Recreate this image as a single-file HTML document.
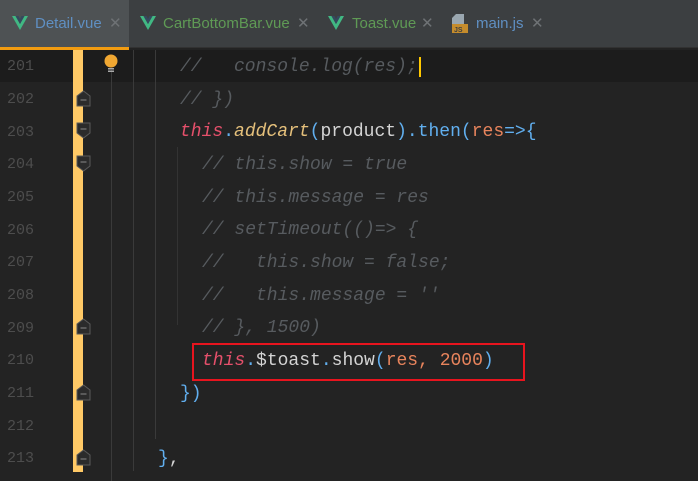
<!DOCTYPE html>
<html><head><meta charset="utf-8"><style>
*{margin:0;padding:0;box-sizing:border-box}
body{width:698px;height:481px;overflow:hidden;background:#232323;position:relative;font-family:"Liberation Sans",sans-serif}
.tabs{position:absolute;left:0;top:0;width:698px;height:48px;background:#3c3f41;border-bottom:1px solid #323232}
.tab{position:absolute;top:0;height:47px;font-size:15px;line-height:47px}
.act{left:0;width:129px;background:#4e5254}
.ul{position:absolute;left:0;top:47px;width:129px;height:3px;background:#f29c11}
.x{color:#6e7275;font-size:15px;position:absolute}
.v{position:absolute;top:16px}
.cur{position:absolute;left:0;top:50px;width:698px;height:32px;background:#1c1c1c}
.ln{position:absolute;left:7px;font-family:"Liberation Mono",monospace;font-size:15px;color:#4d4d4d}
.stripe{position:absolute;left:73px;top:50px;width:10px;height:422px;background:#ffc966}
.vl{position:absolute;width:1px;background:#3a3a3a}
.code{position:absolute;font-family:"Liberation Mono",monospace;font-size:18px;white-space:pre;color:#d4d4d4;line-height:20px}
.c{color:#575b5f;font-style:italic}
.t{color:#e5506b;font-style:italic}
.y{color:#e5c07b;font-style:italic}
.b{color:#61afef}
.o{color:#e8845c}
.fold{position:absolute;left:76px;width:15px;height:17px}
</style></head><body>
<div class="tabs">
 <div class="tab act"></div>
 <svg class="v" style="left:12px" width="16" height="14" viewBox="0 0 16 14"><path d="M0 0h3.5L8 8 12.5 0H16L8 14z" fill="#41b883"/><path d="M3.5 0h3L8 3 9.5 0h3L8 8z" fill="#35495e"/></svg>
 <div class="tab" style="left:35px;color:#5f8fc2">Detail.vue</div>
 <div class="x" style="left:109px;top:14px">✕</div>
 <svg class="v" style="left:140px" width="16" height="14" viewBox="0 0 16 14"><path d="M0 0h3.5L8 8 12.5 0H16L8 14z" fill="#41b883"/><path d="M3.5 0h3L8 3 9.5 0h3L8 8z" fill="#35495e"/></svg>
 <div class="tab" style="left:163px;color:#5f9a55">CartBottomBar.vue</div>
 <div class="x" style="left:297px;top:14px">✕</div>
 <svg class="v" style="left:328px" width="16" height="14" viewBox="0 0 16 14"><path d="M0 0h3.5L8 8 12.5 0H16L8 14z" fill="#41b883"/><path d="M3.5 0h3L8 3 9.5 0h3L8 8z" fill="#35495e"/></svg>
 <div class="tab" style="left:352px;color:#5f9a55">Toast.vue</div>
 <div class="x" style="left:421px;top:14px">✕</div>
 <svg style="position:absolute;left:452px;top:14px" width="16" height="20" viewBox="0 0 16 20"><path d="M4 0h8v10H0V4z" fill="#9aa7b0"/><rect x="0" y="10" width="18" height="9" fill="#c58c2c"/><text x="2" y="18" font-size="7" font-family="Liberation Sans" fill="#3c3f41" font-weight="bold">JS</text></svg>
 <div class="tab" style="left:476px;color:#5f8fc2">main.js</div>
 <div class="x" style="left:531px;top:14px">✕</div>
</div>
<div class="ul"></div>
<div class="cur"></div>
<div class="stripe"></div>
<div class="vl" style="left:111px;top:70px;height:411px"></div>
<div class="vl" style="left:133px;top:50px;height:421px"></div>
<div class="vl" style="left:155px;top:50px;height:389px"></div>
<div class="vl" style="left:177px;top:147px;height:178px;background:#333"></div>
<svg style="position:absolute;left:103px;top:54px" width="16" height="20" viewBox="0 0 16 20"><circle cx="8" cy="7" r="6.5" fill="#f0a732"/><rect x="5" y="14" width="6" height="1.5" fill="#aaa"/><rect x="5" y="16.5" width="6" height="1.5" fill="#aaa"/></svg>
<div class="ln" style="top:58px">201</div>
<div class="ln" style="top:91px">202</div>
<div class="ln" style="top:124px">203</div>
<div class="ln" style="top:156px">204</div>
<div class="ln" style="top:189px">205</div>
<div class="ln" style="top:222px">206</div>
<div class="ln" style="top:254px">207</div>
<div class="ln" style="top:287px">208</div>
<div class="ln" style="top:320px">209</div>
<div class="ln" style="top:352px">210</div>
<div class="ln" style="top:385px">211</div>
<div class="ln" style="top:418px">212</div>
<div class="ln" style="top:450px">213</div>
<svg class="fold" style="top:90px" viewBox="0 0 15 17"><path d="M1 16V6L7.5 1 14 6v10z" fill="#2b2b2b" stroke="#5a5a5a"/><path d="M4.5 10h6" stroke="#888"/></svg>
<svg class="fold" style="top:122px" viewBox="0 0 15 17"><path d="M1 1h13v10l-6.5 5L1 11z" fill="#2b2b2b" stroke="#5a5a5a"/><path d="M4.5 7h6" stroke="#888"/></svg>
<svg class="fold" style="top:155px" viewBox="0 0 15 17"><path d="M1 1h13v10l-6.5 5L1 11z" fill="#2b2b2b" stroke="#5a5a5a"/><path d="M4.5 7h6" stroke="#888"/></svg>
<svg class="fold" style="top:318px" viewBox="0 0 15 17"><path d="M1 16V6L7.5 1 14 6v10z" fill="#2b2b2b" stroke="#5a5a5a"/><path d="M4.5 10h6" stroke="#888"/></svg>
<svg class="fold" style="top:384px" viewBox="0 0 15 17"><path d="M1 16V6L7.5 1 14 6v10z" fill="#2b2b2b" stroke="#5a5a5a"/><path d="M4.5 10h6" stroke="#888"/></svg>
<svg class="fold" style="top:449px" viewBox="0 0 15 17"><path d="M1 16V6L7.5 1 14 6v10z" fill="#2b2b2b" stroke="#5a5a5a"/><path d="M4.5 10h6" stroke="#888"/></svg>
<div class="code" style="left:180px;top:57px"><span class="c">//   console.log(res);</span></div>
<div style="position:absolute;left:419px;top:57px;width:2px;height:20px;background:#ffc800"></div>
<div class="code" style="left:180px;top:90px"><span class="c">// })</span></div>
<div class="code" style="left:180px;top:122px"><span class="t">this</span><span class="b">.</span><span class="y">addCart</span><span class="b">(</span>product<span class="b">).then(</span><span class="o">res</span><span class="b">=&gt;{</span></div>
<div class="code" style="left:202px;top:155px"><span class="c">// this.show = true</span></div>
<div class="code" style="left:202px;top:188px"><span class="c">// this.message = res</span></div>
<div class="code" style="left:202px;top:220px"><span class="c">// setTimeout(()=&gt; {</span></div>
<div class="code" style="left:202px;top:253px"><span class="c">//   this.show = false;</span></div>
<div class="code" style="left:202px;top:286px"><span class="c">//   this.message = ''</span></div>
<div class="code" style="left:202px;top:318px"><span class="c">// }, 1500)</span></div>
<div class="code" style="left:202px;top:351px"><span class="t">this</span><span class="b">.</span>$toast<span class="b">.</span>show<span class="b">(</span><span class="o">res, 2000</span><span class="b">)</span></div>
<div style="position:absolute;left:192px;top:343px;width:333px;height:38px;border:2px solid #e8141e"></div>
<div class="code" style="left:180px;top:384px"><span class="b">})</span></div>
<div class="code" style="left:158px;top:449px"><span class="b">}</span>,</div>
</body></html>
